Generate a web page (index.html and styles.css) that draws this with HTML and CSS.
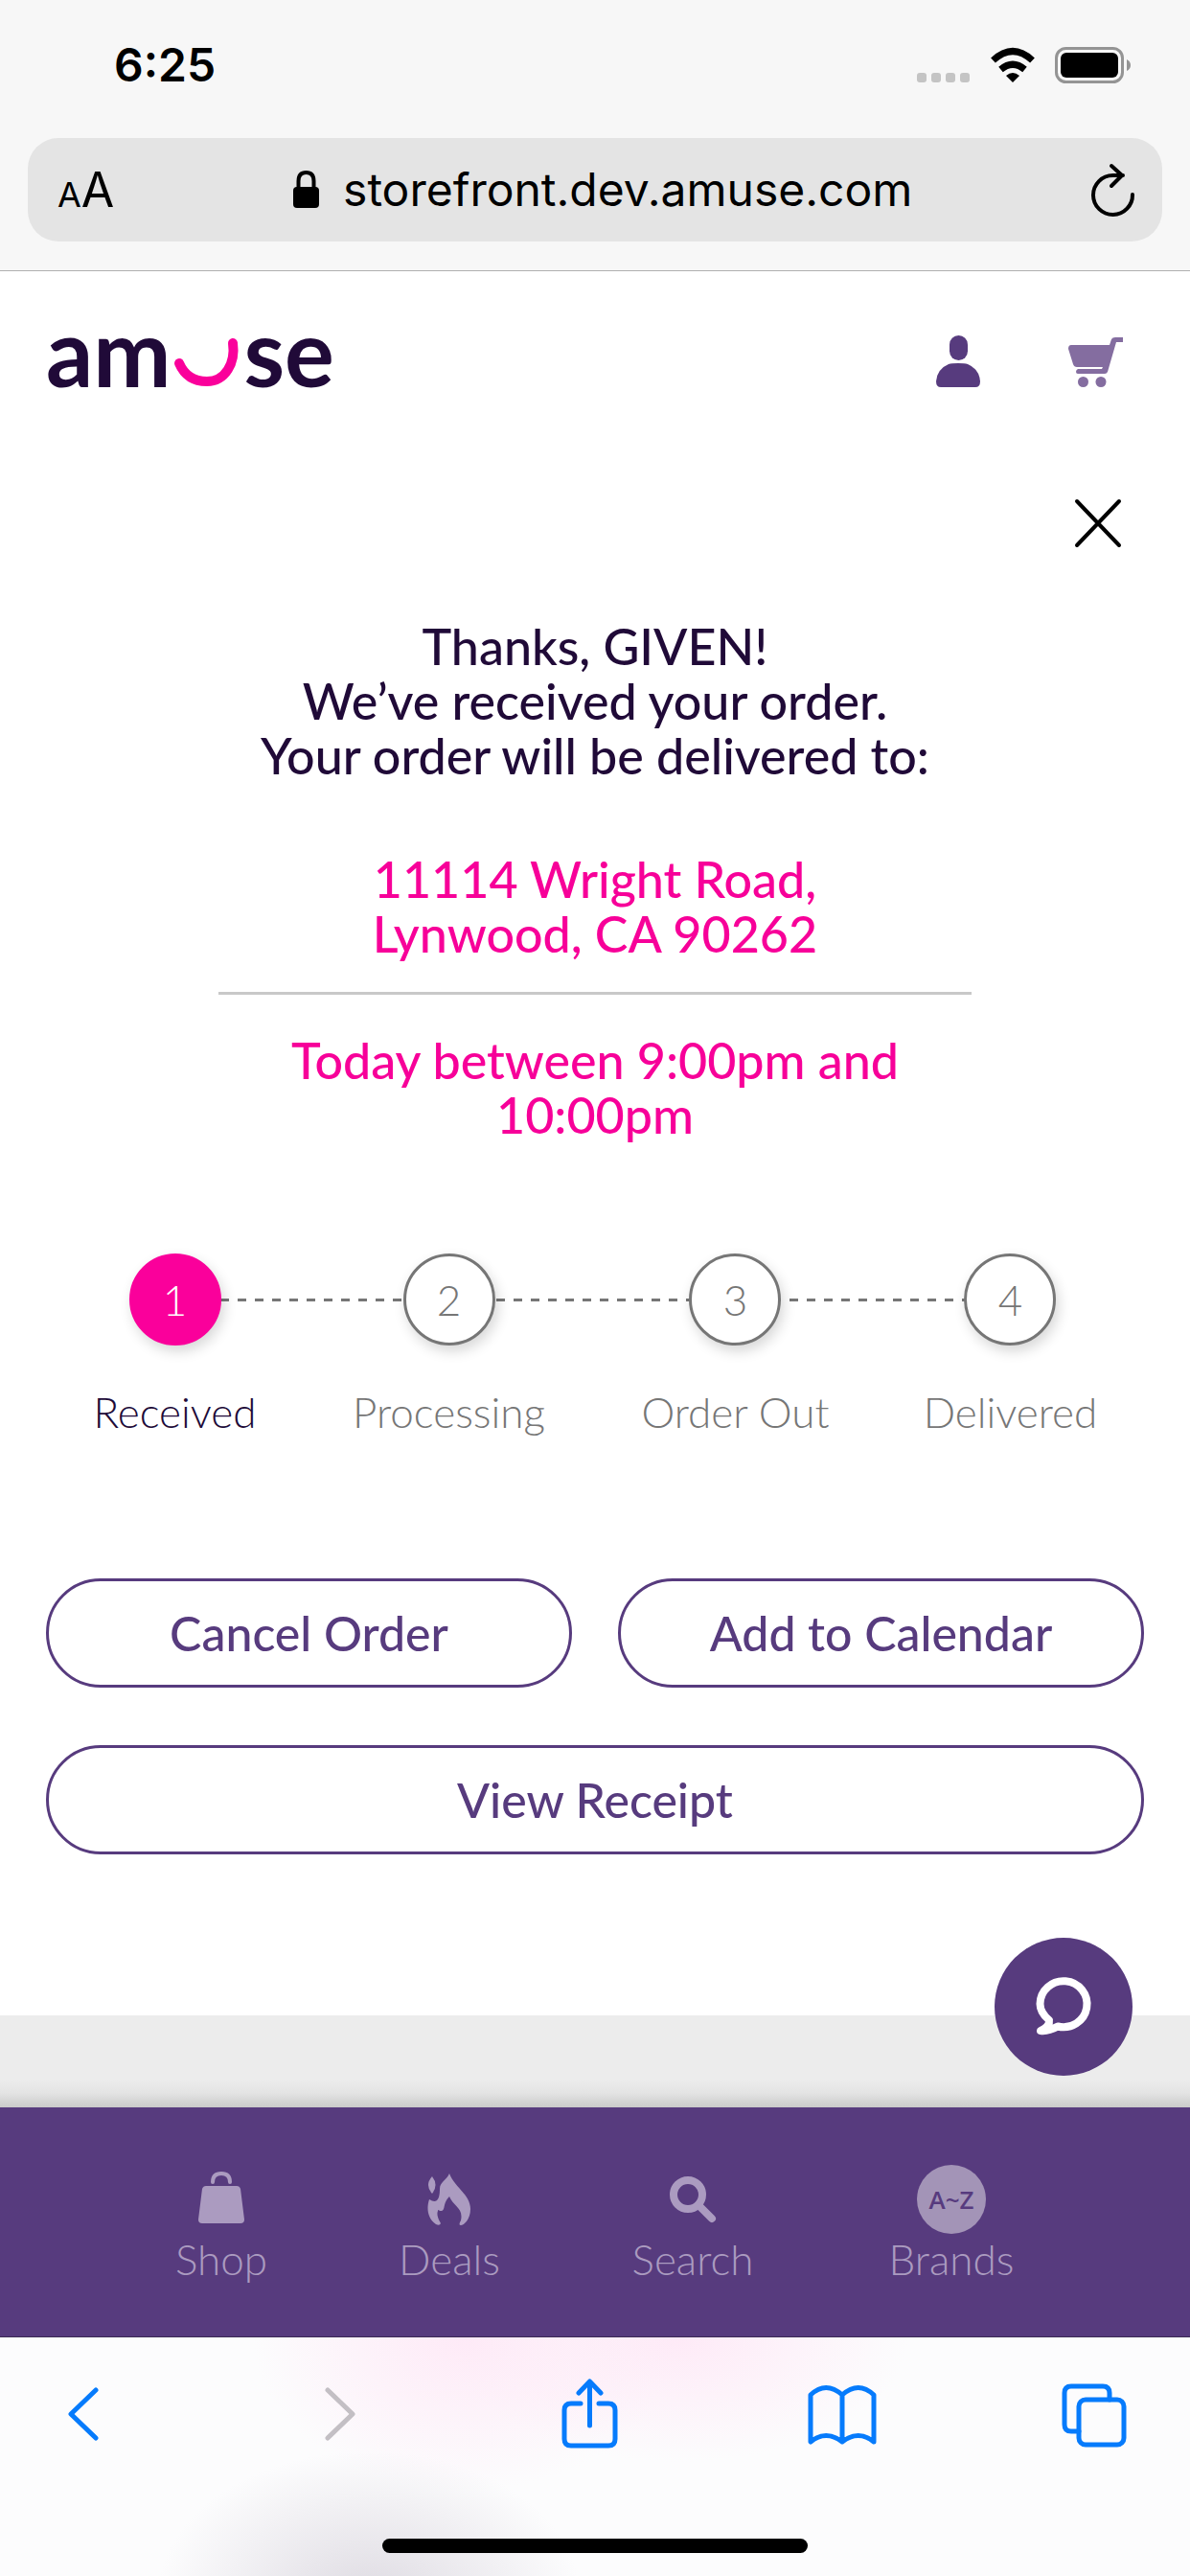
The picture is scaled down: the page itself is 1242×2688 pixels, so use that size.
FILE: index.html
```html
<!DOCTYPE html>
<html lang="en">
<head>
<meta charset="utf-8">
<meta name="viewport" content="width=device-width, initial-scale=1">
<title>amuse – order received</title>
<link rel="stylesheet" href="styles.css">
</head>
<body>
<header class="chrome">
  <div class="status">
    <time class="clock">6:25</time>
    <div class="indicators">
      <svg width="56" height="38" viewBox="0 0 56 38" fill="#c4c4c4" aria-hidden="true"><rect x="0" y="27" width="10" height="10" rx="3"/><rect x="15" y="27" width="10" height="10" rx="3"/><rect x="30" y="27" width="10" height="10" rx="3"/><rect x="45" y="27" width="10" height="10" rx="3"/></svg>
      <svg width="48" height="38" viewBox="0 0 48 38" aria-hidden="true"><path d="M24 37L17 30Q24 24 31 30Z"/><path d="M11.500 23.500Q24 13 36.500 23.500M3.500 14Q24-5 44.500 14" fill="none" stroke="#000" stroke-width="7"/></svg>
      <svg width="80" height="38" viewBox="0 0 80 38" aria-hidden="true"><rect x="1.500" y="1.500" width="69" height="35" rx="10" fill="none" stroke="#949494" stroke-width="3"/><rect x="6" y="6" width="60" height="26" rx="6"/><path d="M75 13q4 2 4 6t-4 6z" fill="#949494"/></svg>
    </div>
  </div>
  <div class="address">
    <button class="reader" type="button" aria-label="Page settings"><span class="reader-small">A</span>A</button>
    <a class="url" href="#">
      <svg width="28" height="40" viewBox="0 0 28 40" aria-hidden="true"><rect y="17" width="27" height="22" rx="4"/><path d="M5.500 19V11q0-9 8-9t8 9v8" fill="none" stroke="#000" stroke-width="4"/></svg>
      <span>storefront.dev.amuse.com</span>
    </a>
    <button class="reload" type="button" aria-label="Reload"><svg width="46" height="56" viewBox="0 0 46 56" fill="none" stroke="#000" stroke-width="4" stroke-linecap="round" stroke-linejoin="round"><path d="M43 33A20.500 20.500 0 1 1 22.500 13H33M21 3L32 13L21 24"/></svg></button>
  </div>
</header>

<div class="store">
  <header class="site-header">
    <a class="logo" href="#" aria-label="amuse home"><span>am</span><svg width="68" height="52" viewBox="0 0 68 52" aria-hidden="true"><path d="M5 27C11 41 22 46 34 46C53 46 64 27 61 6" fill="none" stroke="#fa009b" stroke-width="10" stroke-linecap="round"/></svg><span>se</span></a>
    <div class="header-actions">
      <a href="#" aria-label="Account"><svg width="46" height="56" viewBox="0 0 46 56" fill="#573b7e"><rect x="14" y="0" width="19" height="26" rx="9.500"/><path d="M5 54Q0 54 0 48Q1 35 13 30Q16 29 23 29T33 30Q45 35 46 48Q46 54 41 54Z"/></svg></a>
      <a href="#" aria-label="Cart"><svg width="58" height="56" viewBox="0 0 58 56" fill="#846da0"><path d="M3 10H43L45 4Q46 2 49 2H57V7H50L41 38Q40 40 38 40H10Q8 40 8 38T10 35H35L36 33H9Q6 33 5 30L0 14Q0 10 3 10Z"/><circle cx="15.500" cy="48.500" r="5.500"/><circle cx="34" cy="48.500" r="5.500"/></svg></a>
    </div>
  </header>

  <main class="order">
    <button class="close" type="button" aria-label="Close"><svg width="48" height="50" viewBox="0 0 48 50" stroke="#000" stroke-width="4" stroke-linecap="round"><path d="M2 2L46 48M46 2L2 48"/></svg></button>

    <h1 class="thanks">Thanks, GIVEN!<br>We’ve received your order.<br>Your order will be delivered to:</h1>
    <div class="delivery">
      <p>11114 Wright Road,<br>Lynwood, CA 90262</p>
      <hr>
      <p>Today between 9:00pm and 10:00pm</p>
    </div>

    <ol class="steps">
      <li class="step current"><span class="dot">1</span><span>Received</span></li>
      <li class="step"><span class="dot">2</span><span>Processing</span></li>
      <li class="step"><span class="dot">3</span><span>Order Out</span></li>
      <li class="step"><span class="dot">4</span><span>Delivered</span></li>
    </ol>

    <div class="actions">
      <button type="button">Cancel Order</button>
      <button type="button">Add to Calendar</button>
      <button class="wide" type="button">View Receipt</button>
    </div>
  </main>

  <div class="page-end">
    <button class="chat" type="button" aria-label="Chat with us"><svg width="58" height="62" viewBox="0 0 58 62" fill="none" stroke="#fff" stroke-width="8" stroke-linecap="round" stroke-linejoin="round"><path d="M14 45C8 40 4.500 34 4.500 28A24.500 24 0 1 1 23 51.500Q13 57 5 56Q15 51 14 45Z"/></svg></button>
  </div>

  <nav class="tabs" aria-label="Store">
    <a href="#"><span class="tab-icon"><svg width="48" height="60" viewBox="0 0 48 60" fill="#ab9bc0"><path d="M8 16H40Q43 16 44 19L48 51Q48 55 44 55H4Q0 55 0 51L4 19Q5 16 8 16Z"/><path d="M15 12Q15 3 24 3T33 12" fill="none" stroke="#ab9bc0" stroke-width="4" stroke-linecap="round"/></svg></span>Shop</a>
    <a href="#"><span class="tab-icon"><svg width="46" height="56" viewBox="0 0 46 56" fill="#ab9bc0"><path d="M5 4Q12 13 5 22Q-3 13 5 4Z"/><path d="M23 1C28 15 45 23 45 38C45 49 38 55 35 55Q32 55 35 50C38 37 27 35 23 25C15 33 20 41 13 40Q11 38 11 40C9 45 13 51 14 53Q13 56 9 54C0 48-1 37 2 28C10 33 13 28 13 17C13 10 20 8 23 1Z"/></svg></span>Deals</a>
    <a href="#"><span class="tab-icon"><svg width="48" height="50" viewBox="0 0 48 50" fill="none" stroke="#ab9bc0" stroke-width="8"><circle cx="19" cy="20" r="15"/><path d="M31 32L44 45" stroke-linecap="round"/></svg></span>Search</a>
    <a href="#"><span class="tab-icon az">A~Z</span>Brands</a>
  </nav>
</div>

<footer class="toolbar">
  <div class="toolbar-row">
    <button type="button" aria-label="Back"><svg width="72" height="72" viewBox="0 0 72 72"><path d="M50 11L24 36L50 61"/></svg></button>
    <button class="off" type="button" aria-label="Forward" disabled><svg width="72" height="72" viewBox="0 0 72 72"><path d="M28 11L54 36L28 61"/></svg></button>
    <button type="button" aria-label="Share"><svg width="72" height="76" viewBox="0 0 72 76"><path d="M28 27H18Q11 27 11 34V64Q11 71 18 71H57Q64 71 64 64V34Q64 27 57 27H47M37.500 50V5M26 16L37.500 4L49 16"/></svg></button>
    <button type="button" aria-label="Bookmarks"><svg width="72" height="72" viewBox="0 0 72 72"><path d="M4 16Q20 1 37 16Q54 1 70 16V65Q54 52 37 65Q20 52 4 65ZM37 16V65"/></svg></button>
    <button type="button" aria-label="Tabs"><svg width="72" height="72" viewBox="0 0 72 72"><rect x="20" y="21" width="47" height="47" rx="7"/><path d="M20 54H12Q5 54 5 47V14Q5 7 12 7H45Q52 7 52 14V21"/></svg></button>
  </div>
  <div class="home-bar"></div>
</footer>
</body>
</html>
```
FILE: styles.css
```css
* { box-sizing: border-box; }

body {
  margin: 0;
  min-height: 100vh;
  display: flex;
  flex-direction: column;
  background: #fff;
  color: #200a38;
  font-family: Lato, "Open Sans", sans-serif;
  font-size: 44px;
  line-height: 48px;
}

h1, p, hr, ol { margin: 0; padding: 0; }
a { color: inherit; text-decoration: none; }
svg { display: block; overflow: visible; }
button {
  padding: 0;
  border: 0;
  background: none;
  color: inherit;
  font: inherit;
}

/* Browser chrome */
.chrome {
  padding: 0 29px 30px;
  border-bottom: 1px solid #b0b0b0;
  background: #f7f7f7;
  color: #000;
  font-family: Inter, "Liberation Sans", sans-serif;
}
.status {
  display: flex;
  align-items: center;
  justify-content: space-between;
  height: 144px;
  padding: 0 32px 8px 90px;
}
.clock { font-size: 48px; font-weight: 600; }
.indicators { display: flex; gap: 20px; }
.address {
  display: flex;
  align-items: center;
  justify-content: space-between;
  height: 108px;
  padding: 0 28px 0 31px;
  border-radius: 32px;
  background: #e4e4e4;
}
.reader {
  padding-top: 4px;
  font-size: 50px;
}
.reader-small { font-size: 36px; }
.url {
  display: flex;
  align-items: center;
  gap: 24px;
  font-size: 48px;
}

/* Store page */
.store {
  display: flex;
  flex: 1;
  flex-direction: column;
}
.site-header {
  display: flex;
  align-items: center;
  justify-content: space-between;
  height: 190px;
  padding: 0 69px 0 48px;
}
.logo {
  display: flex;
  align-items: center;
  gap: 4px;
  font-size: 97px;
  font-weight: 700;
  line-height: 96px;
}
.logo span { padding-bottom: 22px; }
.header-actions { display: flex; gap: 92px; }

.order {
  display: flex;
  flex: 1;
  flex-direction: column;
  padding: 48px 48px 168px;
}
.close {
  align-self: flex-end;
  margin-right: 24px;
}
.thanks {
  margin-top: 75px;
  font-size: 52px;
  font-weight: 500;
  line-height: 57px;
  text-align: center;
}
.delivery {
  width: 100%;
  max-width: 786px;
  margin: 72px auto 0;
  color: #f70099;
  font-size: 52px;
  font-weight: 500;
  line-height: 57px;
  text-align: center;
}
.delivery hr {
  height: 3px;
  margin: 32px 0 40px;
  border: 0;
  background: #c8c8c8;
}

.steps {
  position: relative;
  display: grid;
  grid-template-columns: 270fr 304fr 296fr 280fr;
  margin-top: 116px;
  color: #767676;
  font-weight: 300;
  list-style: none;
}
.steps::before {
  content: "";
  position: absolute;
  top: 47px;
  right: 12%;
  left: 146px;
  height: 3px;
  background: repeating-linear-gradient(90deg, #767676 0 9px, transparent 9px 18px);
}
.step {
  position: relative;
  display: flex;
  flex-direction: column;
  align-items: center;
  gap: 45px;
}
.dot {
  display: flex;
  align-items: center;
  justify-content: center;
  width: 96px;
  height: 96px;
  border: 3px solid #767676;
  border-radius: 50%;
  background: #fff;
  box-shadow: 3px 6px 14px rgba(0, 0, 0, .16);
}
.current { color: #200a38; }
.current .dot {
  border-color: #fa009b;
  background: #fa009b;
  color: #fff;
}

.actions {
  display: grid;
  grid-template-columns: 1fr 1fr;
  gap: 60px 48px;
  margin-top: 150px;
}
.actions button {
  height: 114px;
  border: 3px solid #573b7e;
  border-radius: 57px;
  color: #573b7e;
  font-size: 50px;
  font-weight: 500;
}
.actions .wide { grid-column: 1 / -1; }

.page-end {
  position: relative;
  z-index: 1;
  height: 96px;
  background: linear-gradient(#ececec 70%, #e4e4e4 84%, #cacaca);
}
.chat {
  position: absolute;
  top: -81px;
  right: 60px;
  display: flex;
  align-items: center;
  justify-content: center;
  width: 144px;
  height: 144px;
  border-radius: 50%;
  background: #573b7e;
}

.tabs {
  display: grid;
  grid-template-columns: 236fr 240fr 268fr 272fr;
  padding: 60px 113px 57px;
  border-bottom: 1px solid #3b2a55;
  background: #573b7e;
  color: #ab9bc0;
  font-weight: 300;
}
.tabs a {
  display: flex;
  flex-direction: column;
  align-items: center;
  gap: 2px;
}
.tab-icon {
  display: flex;
  align-items: center;
  justify-content: center;
  width: 72px;
  height: 72px;
}
.az {
  border-radius: 50%;
  background: #a394b7;
  color: #573b7e;
  font-family: "Open Sans", sans-serif;
  font-size: 26px;
  font-weight: 600;
}

/* Browser toolbar */
.toolbar {
  padding-bottom: 24px;
  background:
    radial-gradient(220px 150px at 31% 108%, #dfdce3, rgba(223, 220, 227, 0)),
    radial-gradient(220px 160px at 39% 0, #feeaf7, rgba(254, 234, 247, 0)),
    radial-gradient(240px 130px at 57% 0, #feeaf7, rgba(254, 234, 247, 0)),
    #fcfcfd;
}
.toolbar-row {
  display: flex;
  align-items: center;
  justify-content: space-between;
  height: 160px;
  padding: 0 64px 0 50px;
}
.toolbar svg {
  fill: none;
  stroke: #067bfc;
  stroke-width: 5px;
  stroke-linecap: round;
  stroke-linejoin: round;
}
.toolbar .off svg { stroke: #c3bfc4; }
.home-bar {
  width: 444px;
  height: 15px;
  margin: 50px auto 0;
  border-radius: 8px;
  background: #000;
}
```
